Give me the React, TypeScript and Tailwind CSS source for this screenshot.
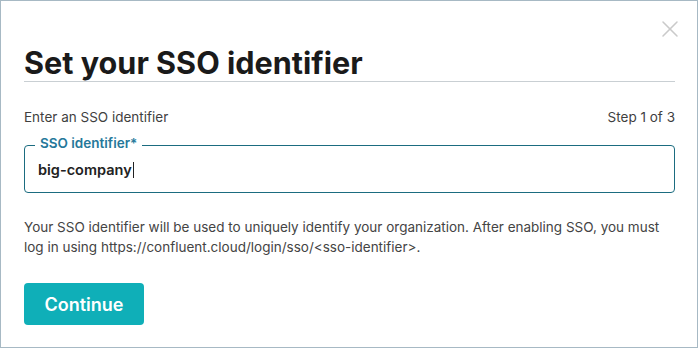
import { X } from "lucide-react";

export default function App() {
  return (
    <div className="w-[698px] h-[348px] bg-white border border-[#a7b9c4] relative font-['Inter',sans-serif] pt-[44px] pl-[23px] pr-[22px]">
      <button className="absolute top-[14px] right-[13px] text-[#cacaca]">
        <X size={28} strokeWidth={1.3} />
      </button>

      <h1 className="text-[30.6px] leading-[36px] font-bold text-[#1a1a1a] border-b border-[#c9cfd3]">
        Set your SSO identifier
      </h1>

      <div className="mt-[25px] flex justify-between text-[13.5px] leading-[20px] text-[#3f3f3f]">
        <span>Enter an SSO identifier</span>
        <span>Step 1 of 3</span>
      </div>

      <fieldset className="mt-[8px] border border-[#1b6c80] rounded-[4px] pl-[13px] pr-3 pb-[12px]">
        <legend className="-ml-[3px] px-[5px] pb-[4px] text-[13.5px] leading-[16px] font-semibold text-[#25789a]">
          SSO identifier*
        </legend>
        <div className="mt-[5px] flex items-center h-[20px] text-[14.5px] font-semibold text-[#222]">
          <span>big-company</span>
          <span className="ml-px w-px h-[16px] bg-[#222]" />
        </div>
      </fieldset>

      <p className="mt-[24px] text-[13.5px] leading-[20px] text-[#444]">
        Your SSO identifier will be used to uniquely identify your organization. After enabling SSO, you must log in using https://confluent.cloud/login/sso/&lt;sso-identifier&gt;.
      </p>

      <button className="mt-[26px] w-[120px] h-[42px] rounded-[4px] bg-[#0fafb8] text-white text-[18px] font-semibold">
        Continue
      </button>
    </div>
  );
}
